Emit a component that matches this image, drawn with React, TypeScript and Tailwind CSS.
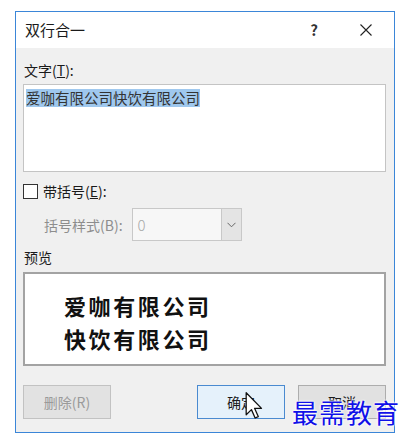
import React from 'react'

const cjk = { fontFamily: '"Noto Sans CJK SC", "Noto Sans", sans-serif' }

function Cursor() {
  return (
    <svg
      className="absolute left-[245px] top-[392px]"
      width="18"
      height="27"
      viewBox="0 0 12 19"
      aria-hidden="true"
    >
      <path
        d="M0.5 0.5 L0.5 16 L4.2 12.4 L6.8 18.3 L9 17.3 L6.4 11.5 L11.3 11.5 Z"
        fill="#fff"
        stroke="#111"
        strokeWidth="0.9"
        strokeLinejoin="round"
      />
    </svg>
  )
}

export default function App() {
  return (
    <div className="relative w-[415px] h-[445px] bg-white pl-[15px] pt-[11px]" style={cjk}>
      {/* Dialog */}
      <div className="w-[380px] h-[422px] border border-[#3b86d8] bg-[#f0f0f0] flex flex-col">
        {/* Title bar */}
        <div className="h-[36px] bg-white flex items-center pl-[9px] text-[15px] text-[#1a1a1a]">
          <span>双行合一</span>
          <span className="ml-auto mr-[42px] text-[15px] font-bold text-[#333]">?</span>
          <svg width="12" height="12" viewBox="0 0 12 12" className="mr-[22px]" aria-hidden="true">
            <path d="M0.5 0.5 L11.5 11.5 M11.5 0.5 L0.5 11.5" stroke="#222" strokeWidth="1.1" />
          </svg>
        </div>

        {/* Body */}
        <div className="flex flex-col pl-[7px] pr-[8px] text-[14px] text-[#1a1a1a]">
          <div className="mt-[12px] h-[20px] leading-[20px] pl-[1px]">
            文字(<span className="underline">T</span>):
          </div>
          <div className="mt-[4px] h-[88px] border border-[#c4c4c4] bg-white pl-[2px] pt-[3px]">
            <span className="bg-[#9fc8ee] text-[#333] text-[14.5px] leading-[18px] inline-block">
              爱咖有限公司快饮有限公司
            </span>
          </div>

          <div className="mt-[9px] h-[20px] flex items-center">
            <div className="w-[15px] h-[15px] border border-[#333] bg-white" />
            <span className="ml-[5px] leading-[20px]">
              带括号(<span className="underline">E</span>):
            </span>
          </div>

          <div className="mt-[7px] h-[33px] flex items-center">
            <span className="ml-[21px] text-[#8d8d8d] leading-[20px]">括号样式(B):</span>
            <div className="ml-[9px] w-[110px] h-[33px] border border-[#c8c8c8] bg-[#f7f7f7] flex">
              <span className="flex-1 pl-[5px] leading-[31px] text-[15px] text-[#a8a8a8] font-light">0</span>
              <div className="w-[20px] h-full border-l border-[#c8c8c8] bg-[#e4e4e4] flex items-center justify-center">
                <svg width="9" height="6" viewBox="0 0 9 6" aria-hidden="true">
                  <path d="M0.5 0.8 L4.5 4.8 L8.5 0.8" fill="none" stroke="#666" strokeWidth="1" />
                </svg>
              </div>
            </div>
          </div>

          <div className="mt-[6px] h-[20px] leading-[20px] pl-[1px]">预览</div>

          <div className="mt-[5px] h-[94px] border-2 border-[#a3a3a3] bg-white pl-[39px] pt-[15px]">
            <div className="text-[22px] font-bold leading-[33px] tracking-[2.6px] text-[#111]">爱咖有限公司</div>
            <div className="text-[22px] font-bold leading-[33px] tracking-[2.6px] text-[#111]">快饮有限公司</div>
          </div>

          {/* Buttons */}
          <div className="mt-[19px] flex items-center">
            <button className="w-[88px] h-[34px] border border-[#c2c2c2] bg-[#e2e2e2] text-[14px] text-[#9a9a9a]">
              删除(R)
            </button>
            <button className="ml-auto w-[88px] h-[34px] border border-[#4a8ad0] bg-[#e5f1fb] text-[14px] text-[#1a1a1a]">
              确定
            </button>
            <button className="ml-[13px] w-[88px] h-[34px] border border-[#adadad] bg-[#e1e1e1] text-[14px] text-[#1a1a1a]">
              取消
            </button>
          </div>
        </div>
      </div>

      <Cursor />

      {/* Watermark */}
      <div
        className="absolute left-[292px] top-[396px] text-[26px] leading-[32px] tracking-[1px] text-[#1010e8]"
        style={{ textShadow: '0 0 2px #fff, 0 0 2px #fff, 0 0 3px #fff' }}
      >
        最需教育
      </div>
    </div>
  )
}
